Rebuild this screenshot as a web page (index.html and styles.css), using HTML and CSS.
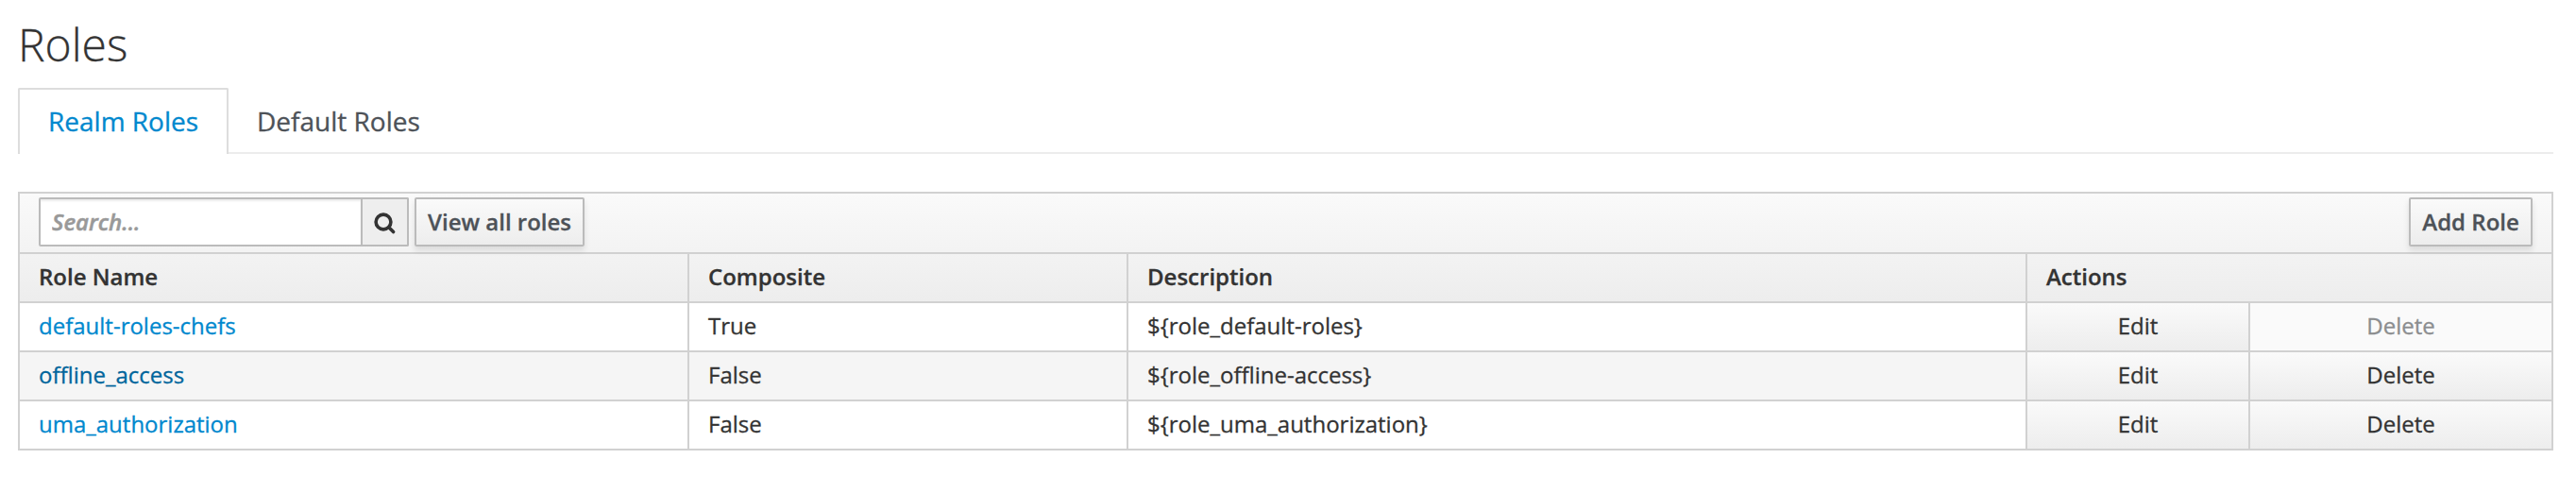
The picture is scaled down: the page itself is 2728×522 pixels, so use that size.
FILE: index.html
```html
<!DOCTYPE html>
<html lang="en">
<head>
<meta charset="utf-8">
<title>Roles</title>
<link rel="stylesheet" href="styles.css">
</head>
<body>
<main class="page">
  <h1 class="title">Roles</h1>
  <nav class="tabs">
    <a class="tab tab-active">Realm Roles</a>
    <a class="tab">Default Roles</a>
  </nav>
  <table class="roles">
    <colgroup>
      <col class="col-name"><col class="col-composite"><col class="col-description"><col class="col-edit"><col class="col-delete">
    </colgroup>
    <thead>
      <tr class="toolbar-row">
        <th colspan="5">
          <div class="toolbar">
            <div class="search">
              <input class="search-input" type="text" placeholder="Search...">
              <span class="search-button">
                <svg class="search-icon" viewBox="0 0 24 24"><circle cx="10" cy="10" r="7.9"/><path d="M15.8 15.8 20.6 20.6"/></svg>
              </span>
            </div>
            <button class="button">View all roles</button>
            <button class="button button-add">Add Role</button>
          </div>
        </th>
      </tr>
      <tr>
        <th>Role Name</th>
        <th>Composite</th>
        <th>Description</th>
        <th colspan="2">Actions</th>
      </tr>
    </thead>
    <tbody>
      <tr>
        <td><a class="link">default-roles-chefs</a></td>
        <td>True</td>
        <td>${role_default-roles}</td>
        <td class="action">Edit</td>
        <td class="action disabled">Delete</td>
      </tr>
      <tr class="hovered">
        <td><a class="link">offline_access</a></td>
        <td>False</td>
        <td>${role_offline-access}</td>
        <td class="action">Edit</td>
        <td class="action">Delete</td>
      </tr>
      <tr>
        <td><a class="link">uma_authorization</a></td>
        <td>False</td>
        <td>${role_uma_authorization}</td>
        <td class="action">Edit</td>
        <td class="action">Delete</td>
      </tr>
    </tbody>
  </table>
</main>
</body>
</html>
```
FILE: styles.css
```css
* { box-sizing: border-box; }
body {
  margin: 0;
  background: #fff;
  color: #333;
  font: 24px/40px "Open Sans", sans-serif;
  -webkit-text-stroke: .3px;
}
.page { padding: 20px 24px 0 19px; }
.title {
  margin: 0;
  font-size: 48px;
  line-height: 53px;
  font-weight: 300;
}
.tabs {
  display: flex;
  height: 70px;
  margin-top: 20px;
  border-bottom: 2px solid #ececec;
}
.tab {
  height: 70px;
  padding: 15px 30px 0 30px;
  font-size: 28px;
  line-height: 40px;
  color: #4d5258;
}
.tab-active {
  width: 223px;
  padding: 13px 0 0 30px;
  background: #fff;
  border: 2px solid #ddd;
  border-bottom: 0;
  border-radius: 2px 2px 0 0;
  color: #0088ce;
}
.roles {
  width: 2685px;
  margin-top: 40px;
  table-layout: fixed;
  border-collapse: separate;
  border-spacing: 0;
  border: solid #d1d1d1;
  border-width: 0 2px 2px 0;
}
.col-name { width: 709px; }
.col-composite { width: 465px; }
.col-description { width: 952px; }
.col-edit { width: 236px; }
.col-delete { width: 321px; }
.roles thead { background: linear-gradient(#fafafa, #ededed); }
.roles th, .roles td {
  height: 52px;
  padding: 4px 20px 6px;
  border: solid #d1d1d1;
  border-width: 2px 0 0 2px;
  text-align: left;
  vertical-align: top;
}
.roles th { font-weight: 600; }
.roles .toolbar-row th { height: 64px; padding: 4px 20px 6px; }
.toolbar { display: flex; height: 52px; }
.search { display: flex; width: 392px; margin-right: 6px; }
.search-input {
  width: 343px;
  height: 52px;
  padding: 0 12px 1px;
  border: 2px solid #bbb;
  border-radius: 2px 0 0 2px;
  background: #fff;
  box-shadow: inset 0 2px 2px rgba(3, 3, 3, .075);
  font: 24px "Open Sans", sans-serif;
  color: #333;
}
.search-input::placeholder { color: #999; font-style: italic; font-weight: 600; opacity: 1; -webkit-text-stroke: .5px; }
.search-button {
  width: 49px;
  border: solid #bbb;
  border-width: 2px 2px 2px 0;
  border-radius: 0 2px 2px 0;
  background: #eee;
}
.search-icon {
  display: block;
  width: 24px;
  height: 24px;
  margin: 14px 0 0 12px;
  fill: none;
  stroke: #333;
  stroke-width: 3.6;
  stroke-linecap: round;
}
.button {
  height: 52px;
  width: 180px;
  padding: 0;
  border: 2px solid #bbb;
  border-radius: 2px;
  background: linear-gradient(#fafafa, #ededed);
  box-shadow: 0 4px 6px rgba(3, 3, 3, .1);
  color: #4d5258;
  font: 600 24px/48px "Open Sans", sans-serif;
  -webkit-text-stroke: .3px;
}
.button-add { width: 131px; margin-left: auto; }
.link { color: #0088ce; }
.hovered td { background: #f5f5f5; }
.hovered .link { color: #00659c; }
.roles td.action {
  background: linear-gradient(#fafafa, #ededed);
  text-align: center;
}
.roles td.disabled { background: #fafafa; color: #8b8d8f; }
```
